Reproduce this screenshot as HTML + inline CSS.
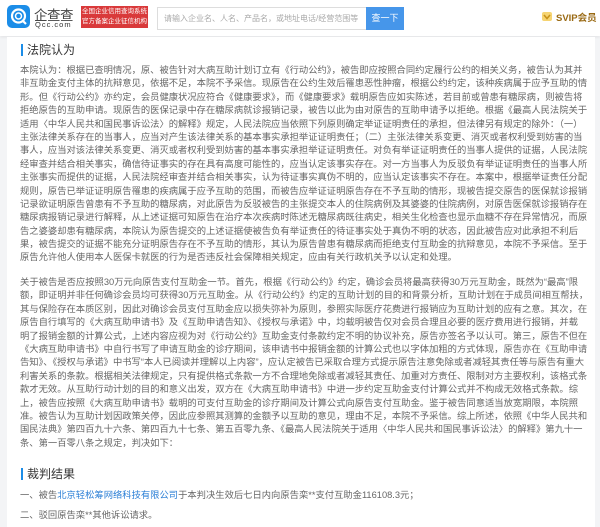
<!DOCTYPE html>
<html><head><meta charset="utf-8"><style>
*{margin:0;padding:0;box-sizing:border-box}
body{width:600px;height:521px;overflow:hidden;background:#f3f4f6;font-family:"Liberation Sans","Noto Sans CJK SC",sans-serif;color:#555}
.hdr{position:absolute;left:0;top:0;width:600px;height:36px;background:#fff;box-shadow:0 1px 3px rgba(0,0,0,.08)}
.logo{position:absolute;left:7px;top:5px;width:23px;height:23px;background:#1b8de8;border-radius:5px}
.card{position:absolute;left:7px;top:37px;width:588px;height:490px;background:#fff}
.h{position:absolute;left:14px;font-size:12px;color:#333;border-left:2px solid #1b8de8;padding-left:4px;line-height:12px}
.p{position:absolute;left:13px;width:558px;font-size:9.3px;line-height:13.4px;color:#666}
.p div{text-align:justify;text-align-last:justify;white-space:nowrap;height:13.4px}
.p div.l{text-align-last:left}
</style></head><body>
<div class="hdr">
<div class="logo"><svg width="23" height="23" viewBox="0 0 23 23"><circle cx="11.5" cy="11" r="6.5" fill="none" stroke="#fff" stroke-width="2.2"/><circle cx="11.5" cy="11" r="3" fill="none" stroke="#fff" stroke-width="1.5"/><path d="M15 15 L19 19" stroke="#fff" stroke-width="2.2"/></svg></div>
<div style="position:absolute;left:34px;top:4px;font-size:13.5px;color:#444;letter-spacing:-0.5px">企查查</div>
<div style="position:absolute;left:35px;top:20px;font-size:7.5px;color:#333;letter-spacing:1px">Qcc.com</div>
<div style="position:absolute;left:81px;top:6px;width:67px;height:22px;background:#d9393a;color:#fff;font-size:6.5px;line-height:10px;padding:1px 1px;white-space:nowrap;overflow:hidden">全国企业信用查询系统<br>官方备案企业征信机构</div>
<div style="position:absolute;left:157px;top:7px;width:209px;height:23px;border:1px solid #ddd;border-right:none;font-size:8px;color:#aaa;line-height:21px;padding-left:6px;white-space:nowrap;overflow:hidden">请输入企业名、人名、产品名，或地址电话/经营范围等</div>
<div style="position:absolute;left:366px;top:7px;width:38px;height:23px;background:#4696ea;color:#fff;font-size:9px;line-height:23px;text-align:center">查一下</div>
<svg style="position:absolute;left:541px;top:11px" width="12" height="11" viewBox="0 0 12 11"><rect x="1" y="1" width="10" height="9" rx="2" fill="#f6d472"/><path d="M3 4 L6 7.5 L9 4" fill="none" stroke="#c8931a" stroke-width="1.6"/></svg>
<div style="position:absolute;left:556px;top:10px;font-size:9.5px;color:#9a6a14;font-weight:bold">SVIP会员</div>
</div>
<div class="card">
<div class="h" style="top:7px">法院认为</div>
<div class="p" style="top:27px">
<div>本院认为：根据已查明情况，原、被告针对大病互助计划订立有《行动公约》，被告即应按照合同约定履行公约的相关义务，被告认为其并</div>
<div>非互助金支付主体的抗辩意见，依据不足，本院不予采信。现原告在公约生效后罹患恶性肿瘤，根据公约约定，该种疾病属于应予互助的情</div>
<div>形。但《行动公约》亦约定，会员健康状况应符合《健康要求》，而《健康要求》载明原告应如实陈述，若目前或曾患有糖尿病，则被告将</div>
<div>拒绝原告的互助申请。现原告的医保记录中存在糖尿病就诊报销记录，被告以此为由对原告的互助申请予以拒绝。根据《最高人民法院关于</div>
<div>适用〈中华人民共和国民事诉讼法〉的解释》规定，人民法院应当依照下列原则确定举证证明责任的承担，但法律另有规定的除外：（一）</div>
<div>主张法律关系存在的当事人，应当对产生该法律关系的基本事实承担举证证明责任；（二）主张法律关系变更、消灭或者权利受到妨害的当</div>
<div>事人，应当对该法律关系变更、消灭或者权利受到妨害的基本事实承担举证证明责任。对负有举证证明责任的当事人提供的证据，人民法院</div>
<div>经审查并结合相关事实，确信待证事实的存在具有高度可能性的，应当认定该事实存在。对一方当事人为反驳负有举证证明责任的当事人所</div>
<div>主张事实而提供的证据，人民法院经审查并结合相关事实，认为待证事实真伪不明的，应当认定该事实不存在。本案中，根据举证责任分配</div>
<div>规则，原告已举证证明原告罹患的疾病属于应予互助的范围，而被告应举证证明原告存在不予互助的情形，现被告提交原告的医保就诊报销</div>
<div>记录欲证明原告曾患有不予互助的糖尿病，对此原告为反驳被告的主张提交本人的住院病例及其婆婆的住院病例，对原告医保就诊报销存在</div>
<div>糖尿病报销记录进行解释，从上述证据可知原告在治疗本次疾病时陈述无糖尿病既往病史，相关生化检查也显示血糖不存在异常情况，而原</div>
<div>告之婆婆却患有糖尿病，本院认为原告提交的上述证据使被告负有举证责任的待证事实处于真伪不明的状态，因此被告应对此承担不利后</div>
<div>果，被告提交的证据不能充分证明原告存在不予互助的情形，其认为原告曾患有糖尿病而拒绝支付互助金的抗辩意见，本院不予采信。至于</div>
<div class="l">原告允许他人使用本人医保卡就医的行为是否违反社会保障相关规定，应由有关行政机关予以认定和处理。</div>
</div>
<div class="p" style="top:239px">
<div>关于被告是否应按照30万元向原告支付互助金一节。首先，根据《行动公约》约定，确诊会员将最高获得30万元互助金，既然为“最高”限</div>
<div>额，即证明并非任何确诊会员均可获得30万元互助金。从《行动公约》约定的互助计划的目的和背景分析，互助计划在于成员间相互帮扶，</div>
<div>其与保险存在本质区别，因此对确诊会员支付互助金应以损失弥补为原则，参照实际医疗花费进行报销应为互助计划的应有之意。其次，在</div>
<div>原告自行填写的《大病互助申请书》及《互助申请告知》、《授权与承诺》中，均载明被告仅对会员合理且必要的医疗费用进行报销，并载</div>
<div>明了报销金额的计算公式，上述内容应视为对《行动公约》互助金支付条款约定不明的协议补充，原告亦签名予以认可。第三，原告不但在</div>
<div>《大病互助申请书》中自行书写了申请互助金的诊疗期间，该申请书中报销金额的计算公式也以字体加粗的方式体现，原告亦在《互助申请</div>
<div>告知》、《授权与承诺》中书写“本人已阅读并理解以上内容”，应认定被告已采取合理方式提示原告注意免除或者减轻其责任等与原告有重大</div>
<div>利害关系的条款。根据相关法律规定，只有提供格式条款一方不合理地免除或者减轻其责任、加重对方责任、限制对方主要权利，该格式条</div>
<div>款才无效。从互助行动计划的目的和意义出发，双方在《大病互助申请书》中进一步约定互助金支付计算公式并不构成无效格式条款。综</div>
<div>上，被告应按照《大病互助申请书》载明的可支付互助金的诊疗期间及计算公式向原告支付互助金。鉴于被告同意适当放宽期限，本院照</div>
<div>准。被告认为互助计划因政策关停，因此应参照其测算的金额予以互助的意见，理由不足，本院不予采信。综上所述，依照《中华人民共和</div>
<div>国民法典》第四百九十六条、第四百九十七条、第五百零九条、《最高人民法院关于适用〈中华人民共和国民事诉讼法〉的解释》第九十一</div>
<div class="l">条、第一百零八条之规定，判决如下：</div>
</div>
<div class="h" style="top:431px">裁判结果</div>
<div class="p" style="top:452px"><div class="l">一、被告<span style="color:#2b7fd6">北京轻松筹网络科技有限公司</span>于本判决生效后七日内向原告栾**支付互助金116108.3元；</div></div>
<div class="p" style="top:472px"><div class="l">二、驳回原告栾**其他诉讼请求。</div></div>
</div>
</body></html>
